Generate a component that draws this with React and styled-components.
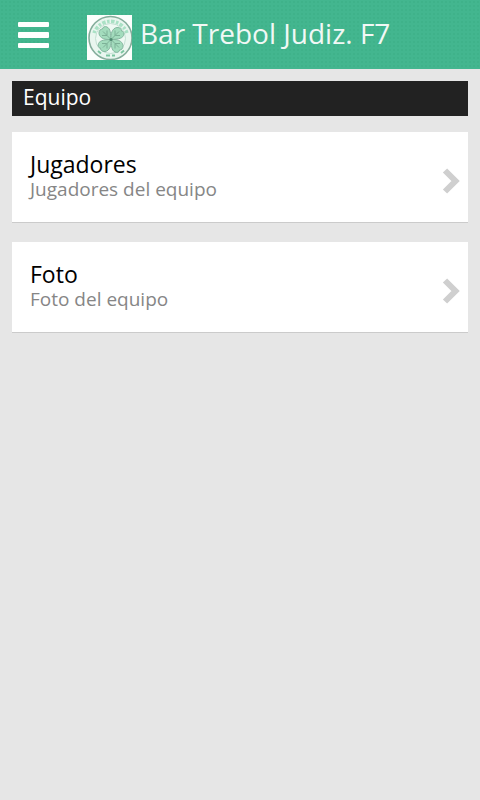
import styled, { createGlobalStyle } from 'styled-components'

const items = [
  { title: 'Jugadores', detail: 'Jugadores del equipo' },
  { title: 'Foto', detail: 'Foto del equipo' },
]

function Crest() {
  return (
    <CrestSvg viewBox="0 0 45 45" aria-hidden="true">
      <rect width="45" height="45" fill="#fbfefc" />
      <ellipse cx="23.500" cy="23" rx="21.500" ry="21.500" fill="#e9f6ef" stroke="#84ad9b" strokeWidth="1.600" />
      <path
        d="M7 18A17.500 17.500 0 0 1 40 18"
        fill="none"
        stroke="#8fd9b3"
        strokeWidth="3.500"
        strokeDasharray="2.500 1.500 3.500 1.500"
        opacity="0.7"
      />
      <circle cx="23.500" cy="23.500" r="15" fill="#eef9f3" stroke="#b9d9ca" strokeWidth="0.800" />
      {[0, 90, 180, 270].map((angle) => (
        <g key={angle} transform={`rotate(${angle} 24 24.500)`}>
          <path
            d="M24 24.500C19 25 12.500 23.500 12 18.500C11.800 15.500 13.500 14 15.500 14C15.500 12 18 11 20 12C23.500 13.500 23.800 19 24 24.500Z"
            fill="#a3dcbd"
            stroke="#86b7a0"
            strokeWidth="1"
          />
          <path d="M24 24.500L16 16.500M20 20V15.500M20 20.500H15" fill="none" stroke="#78ab93" strokeWidth="0.900" />
        </g>
      ))}
      <circle cx="24" cy="24.500" r="1.500" fill="#4f8a70" />
      <path d="M11 36l3 2.500M19 40.500h4M25 40.500h3M34 38l3-2.500" stroke="#7cc5a1" strokeWidth="2" />
    </CrestSvg>
  )
}

function App() {
  return (
    <>
      <GlobalStyle />
      <Header>
        <MenuButton aria-label="Menu">
          <svg width="31" height="26" viewBox="0 0 31 26" fill="#fff">
            <rect width="31" height="5" rx="1" />
            <rect y="10" width="31" height="6" rx="1" />
            <rect y="21" width="31" height="5" rx="1" />
          </svg>
        </MenuButton>
        <Crest />
        <Title>Bar Trebol Judiz. F7</Title>
      </Header>
      <Content>
        <SectionTitle>Equipo</SectionTitle>
        {items.map((item) => (
          <Card key={item.title}>
            <CardText>
              <CardTitle>{item.title}</CardTitle>
              <CardDetail>{item.detail}</CardDetail>
            </CardText>
            <svg width="18" height="26" viewBox="0 0 18 26" fill="none" stroke="#cfcfcf" strokeWidth="6">
              <path d="M3 2.500L13.500 13L3 23.500" />
            </svg>
          </Card>
        ))}
      </Content>
    </>
  )
}

const GlobalStyle = createGlobalStyle`
  * {
    box-sizing: border-box;
  }

  body {
    margin: 0;
    background-color: #e6e6e6;
    font-family: 'Open Sans', 'Noto Sans', sans-serif;
  }
`

const Header = styled.header`
  display: flex;
  align-items: center;
  height: 69px;
  padding: 0 18px;
  background-color: #43b68f;
  background-image: radial-gradient(#3fb28a 1px, transparent 1px);
  background-size: 4px 4px;
`

const MenuButton = styled.button`
  display: flex;
  margin-right: 38px;
  padding: 0;
  border: none;
  background: none;
  cursor: pointer;
`

const CrestSvg = styled.svg`
  flex: none;
  width: 45px;
  height: 45px;
  margin-top: 6px;
`

const Title = styled.h1`
  margin: 0 0 4px 8px;
  color: #f1f8f5;
  font-size: 28px;
  font-weight: 400;
  line-height: 40px;
  white-space: nowrap;
`

const Content = styled.main`
  padding: 12px;
`

const SectionTitle = styled.h2`
  margin: 0 0 16px;
  padding: 0 11px 2px;
  background-color: #222;
  color: #fff;
  font-size: 21px;
  font-weight: 400;
  line-height: 33px;
`

const Card = styled.button`
  display: flex;
  align-items: center;
  justify-content: space-between;
  width: 100%;
  height: 91px;
  margin-bottom: 19px;
  padding: 8px 8px 0 18px;
  border: none;
  border-bottom: 1px solid #cbcbcb;
  background-color: #fff;
  font-family: inherit;
  text-align: left;
  cursor: pointer;
`

const CardText = styled.span`
  display: flex;
  flex-direction: column;
  padding-bottom: 9px;
`

const CardTitle = styled.span`
  color: #000;
  font-size: 23px;
  line-height: 26px;
`

const CardDetail = styled.span`
  color: #868686;
  font-size: 19px;
  line-height: 25px;
`

export default App
